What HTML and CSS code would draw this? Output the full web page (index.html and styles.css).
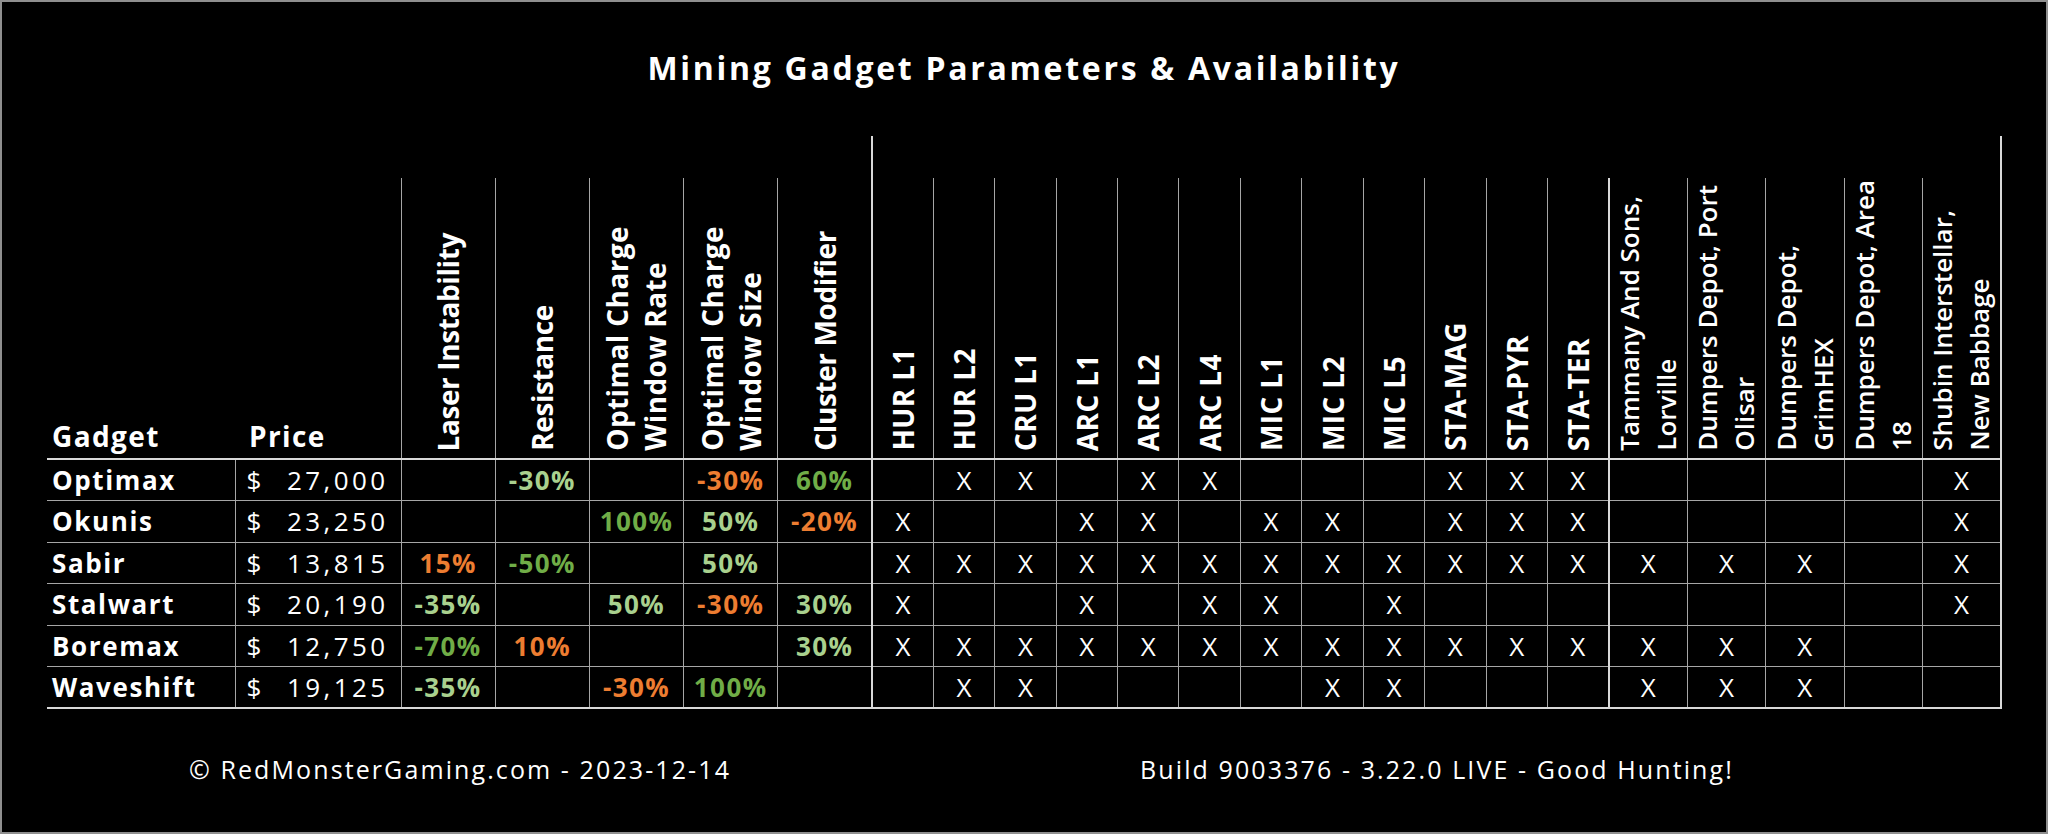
FILE: index.html
```html
<!DOCTYPE html>
<html>
<head>
<meta charset="utf-8">
<link rel="stylesheet" href="styles.css">
</head>
<body>
<div class="frame">
  <h1 class="title">Mining Gadget Parameters &amp; Availability</h1>
  <table class="grid">
    <colgroup>
      <col class="c-gadget"><col class="c-price">
      <col class="c-param"><col class="c-param"><col class="c-param"><col class="c-param"><col class="c-param">
      <col class="c-loc"><col class="c-loc"><col class="c-loc"><col class="c-loc"><col class="c-loc"><col class="c-loc">
      <col class="c-loc"><col class="c-loc"><col class="c-loc"><col class="c-loc"><col class="c-loc"><col class="c-loc">
      <col class="c-shop"><col class="c-shop"><col class="c-shop"><col class="c-shop"><col class="c-shop">
    </colgroup>
    <thead>
      <tr class="group-row">
        <th colspan="7" class="blank"></th>
        <th colspan="17" class="avail"></th>
      </tr>
      <tr class="head-row">
        <th class="h-plain h-gadget">Gadget</th>
        <th class="h-plain h-price">Price</th>
        <th class="h-rot sep-left"><div class="hwrap"><span class="rot tight">Laser Instability</span></div></th>
        <th class="h-rot"><div class="hwrap"><span class="rot tight">Resistance</span></div></th>
        <th class="h-rot"><div class="hwrap"><span class="rot">Optimal Charge<br>Window Rate</span></div></th>
        <th class="h-rot"><div class="hwrap"><span class="rot">Optimal Charge<br>Window Size</span></div></th>
        <th class="h-rot"><div class="hwrap"><span class="rot tight">Cluster Modifier</span></div></th>
        <th class="h-rot group-start"><div class="hwrap"><span class="rot">HUR L1</span></div></th>
        <th class="h-rot"><div class="hwrap"><span class="rot">HUR L2</span></div></th>
        <th class="h-rot"><div class="hwrap"><span class="rot">CRU L1</span></div></th>
        <th class="h-rot"><div class="hwrap"><span class="rot">ARC L1</span></div></th>
        <th class="h-rot"><div class="hwrap"><span class="rot">ARC L2</span></div></th>
        <th class="h-rot"><div class="hwrap"><span class="rot">ARC L4</span></div></th>
        <th class="h-rot"><div class="hwrap"><span class="rot">MIC L1</span></div></th>
        <th class="h-rot"><div class="hwrap"><span class="rot">MIC L2</span></div></th>
        <th class="h-rot"><div class="hwrap"><span class="rot">MIC L5</span></div></th>
        <th class="h-rot"><div class="hwrap"><span class="rot">STA-MAG</span></div></th>
        <th class="h-rot"><div class="hwrap"><span class="rot">STA-PYR</span></div></th>
        <th class="h-rot"><div class="hwrap"><span class="rot">STA-TER</span></div></th>
        <th class="h-rot shop group-start"><div class="hwrap"><span class="rot">Tammany And Sons,<br>Lorville</span></div></th>
        <th class="h-rot shop"><div class="hwrap"><span class="rot">Dumpers Depot, Port<br>Olisar</span></div></th>
        <th class="h-rot shop"><div class="hwrap"><span class="rot">Dumpers Depot,<br>GrimHEX</span></div></th>
        <th class="h-rot shop"><div class="hwrap"><span class="rot">Dumpers Depot, Area<br>18</span></div></th>
        <th class="h-rot shop last"><div class="hwrap"><span class="rot">Shubin Interstellar,<br>New Babbage</span></div></th>
      </tr>
    </thead>
    <tbody>
      <tr>
        <td class="name">Optimax</td>
        <td class="price"><div class="pw"><span>$</span><span class="num">27,000</span></div></td>
        <td class="val"></td><td class="val lg">-30%</td><td class="val"></td><td class="val or">-30%</td><td class="val gr">60%</td>
        <td class="x group-start"></td><td class="x">X</td><td class="x">X</td><td class="x"></td><td class="x">X</td><td class="x">X</td>
        <td class="x"></td><td class="x"></td><td class="x"></td><td class="x">X</td><td class="x">X</td><td class="x">X</td>
        <td class="x group-start"></td><td class="x"></td><td class="x"></td><td class="x"></td><td class="x last">X</td>
      </tr>
      <tr>
        <td class="name">Okunis</td>
        <td class="price"><div class="pw"><span>$</span><span class="num">23,250</span></div></td>
        <td class="val"></td><td class="val"></td><td class="val gr">100%</td><td class="val lg">50%</td><td class="val or">-20%</td>
        <td class="x group-start">X</td><td class="x"></td><td class="x"></td><td class="x">X</td><td class="x">X</td><td class="x"></td>
        <td class="x">X</td><td class="x">X</td><td class="x"></td><td class="x">X</td><td class="x">X</td><td class="x">X</td>
        <td class="x group-start"></td><td class="x"></td><td class="x"></td><td class="x"></td><td class="x last">X</td>
      </tr>
      <tr>
        <td class="name">Sabir</td>
        <td class="price"><div class="pw"><span>$</span><span class="num">13,815</span></div></td>
        <td class="val or">15%</td><td class="val gr">-50%</td><td class="val"></td><td class="val lg">50%</td><td class="val"></td>
        <td class="x group-start">X</td><td class="x">X</td><td class="x">X</td><td class="x">X</td><td class="x">X</td><td class="x">X</td>
        <td class="x">X</td><td class="x">X</td><td class="x">X</td><td class="x">X</td><td class="x">X</td><td class="x">X</td>
        <td class="x group-start">X</td><td class="x">X</td><td class="x">X</td><td class="x"></td><td class="x last">X</td>
      </tr>
      <tr>
        <td class="name">Stalwart</td>
        <td class="price"><div class="pw"><span>$</span><span class="num">20,190</span></div></td>
        <td class="val lg">-35%</td><td class="val"></td><td class="val lg">50%</td><td class="val or">-30%</td><td class="val lg">30%</td>
        <td class="x group-start">X</td><td class="x"></td><td class="x"></td><td class="x">X</td><td class="x"></td><td class="x">X</td>
        <td class="x">X</td><td class="x"></td><td class="x">X</td><td class="x"></td><td class="x"></td><td class="x"></td>
        <td class="x group-start"></td><td class="x"></td><td class="x"></td><td class="x"></td><td class="x last">X</td>
      </tr>
      <tr>
        <td class="name">Boremax</td>
        <td class="price"><div class="pw"><span>$</span><span class="num">12,750</span></div></td>
        <td class="val gr">-70%</td><td class="val or">10%</td><td class="val"></td><td class="val"></td><td class="val lg">30%</td>
        <td class="x group-start">X</td><td class="x">X</td><td class="x">X</td><td class="x">X</td><td class="x">X</td><td class="x">X</td>
        <td class="x">X</td><td class="x">X</td><td class="x">X</td><td class="x">X</td><td class="x">X</td><td class="x">X</td>
        <td class="x group-start">X</td><td class="x">X</td><td class="x">X</td><td class="x"></td><td class="x last"></td>
      </tr>
      <tr>
        <td class="name">Waveshift</td>
        <td class="price"><div class="pw"><span>$</span><span class="num">19,125</span></div></td>
        <td class="val lg">-35%</td><td class="val"></td><td class="val or">-30%</td><td class="val gr">100%</td><td class="val"></td>
        <td class="x group-start"></td><td class="x">X</td><td class="x">X</td><td class="x"></td><td class="x"></td><td class="x"></td>
        <td class="x"></td><td class="x">X</td><td class="x">X</td><td class="x"></td><td class="x"></td><td class="x"></td>
        <td class="x group-start">X</td><td class="x">X</td><td class="x">X</td><td class="x"></td><td class="x last"></td>
      </tr>
    </tbody>
  </table>
  <div class="footer">
    <div class="foot-left">© RedMonsterGaming.com - 2023-12-14</div>
    <div class="foot-right">Build 9003376 - 3.22.0 LIVE - Good Hunting!</div>
  </div>
</div>
</body>
</html>
```

FILE: styles.css
```css
html, body {
  margin: 0;
  padding: 0;
  background: #000;
}

.frame {
  width: 2048px;
  height: 834px;
  box-sizing: border-box;
  border: 2px solid #8f8f8f;
  background: #000;
  color: #fff;
  font-family: "Open Sans", "Liberation Sans", sans-serif;
  padding: 46px 0 0 45px;
  overflow: hidden;
}

.title {
  margin: 0 0 48px -45px;
  height: 40px;
  line-height: 40px;
  font-size: 32px;
  font-weight: 700;
  text-align: center;
  letter-spacing: 2.7px;
}

.grid {
  border-collapse: collapse;
  table-layout: fixed;
  width: 1954px;
}

.c-gadget { width: 188px; }
.c-price { width: 166px; }
.c-param { width: 94.2px; }
.c-loc { width: 61.42px; }
.c-shop { width: 78.4px; }

.grid th, .grid td {
  padding: 0;
}

.group-row th {
  height: 42px;
}

.group-row .avail {
  border-left: 2px solid #d9d9d9;
  border-right: 2px solid #d9d9d9;
}

.head-row th {
  height: 280px;
  border-bottom: 2px solid #d9d9d9;
  vertical-align: bottom;
  font-weight: 700;
  font-size: 28px;
}

.grid .h-plain {
  text-align: left;
  padding: 0 0 0 5px;
  line-height: 44px;
  letter-spacing: 1.4px;
}

.grid .h-price {
  padding-left: 14px;
}

.h-rot {
  border-left: 1px solid #a6a6a6;
  border-right: 1px solid #a6a6a6;
}

.hwrap {
  height: 280px;
  box-sizing: border-box;
  padding-bottom: 7px;
  display: flex;
  justify-content: center;
  align-items: flex-end;
}

.rot {
  writing-mode: vertical-rl;
  transform: rotate(180deg);
  white-space: nowrap;
  text-align: left;
  line-height: 38px;
  letter-spacing: 0.4px;
}

.rot.tight {
  letter-spacing: -0.4px;
}

.shop .rot {
  font-weight: 600;
  font-size: 26px;
  line-height: 37px;
  letter-spacing: 0;
}

.grid .group-start {
  border-left: 2px solid #d9d9d9;
}

.grid .last {
  border-right: 2px solid #d9d9d9;
}

tbody tr {
  height: 41.5px;
}

tbody td {
  border: 1px solid #a6a6a6;
  font-size: 26px;
  line-height: 30px;
  vertical-align: middle;
}

tbody tr:last-child td {
  border-bottom: 2px solid #d9d9d9;
}

.grid td.name {
  border-left: none;
  font-weight: 700;
  padding-left: 5px;
  letter-spacing: 1.6px;
}

.pw {
  display: flex;
  justify-content: space-between;
  padding: 0 12px 0 11px;
}

.num {
  letter-spacing: 3.4px;
}

.val {
  text-align: center;
  font-weight: 700;
  letter-spacing: 1.4px;
}

.lg { color: #a9d18e; }
.gr { color: #70ad47; }
.or { color: #ed7d31; }

.x {
  text-align: center;
  font-weight: 400;
}

.footer {
  display: grid;
  grid-template-columns: 826px 1128px;
  margin-top: 42px;
  font-size: 25px;
  line-height: 36px;
  letter-spacing: 2.1px;
}

.foot-left, .foot-right {
  text-align: center;
}
```
